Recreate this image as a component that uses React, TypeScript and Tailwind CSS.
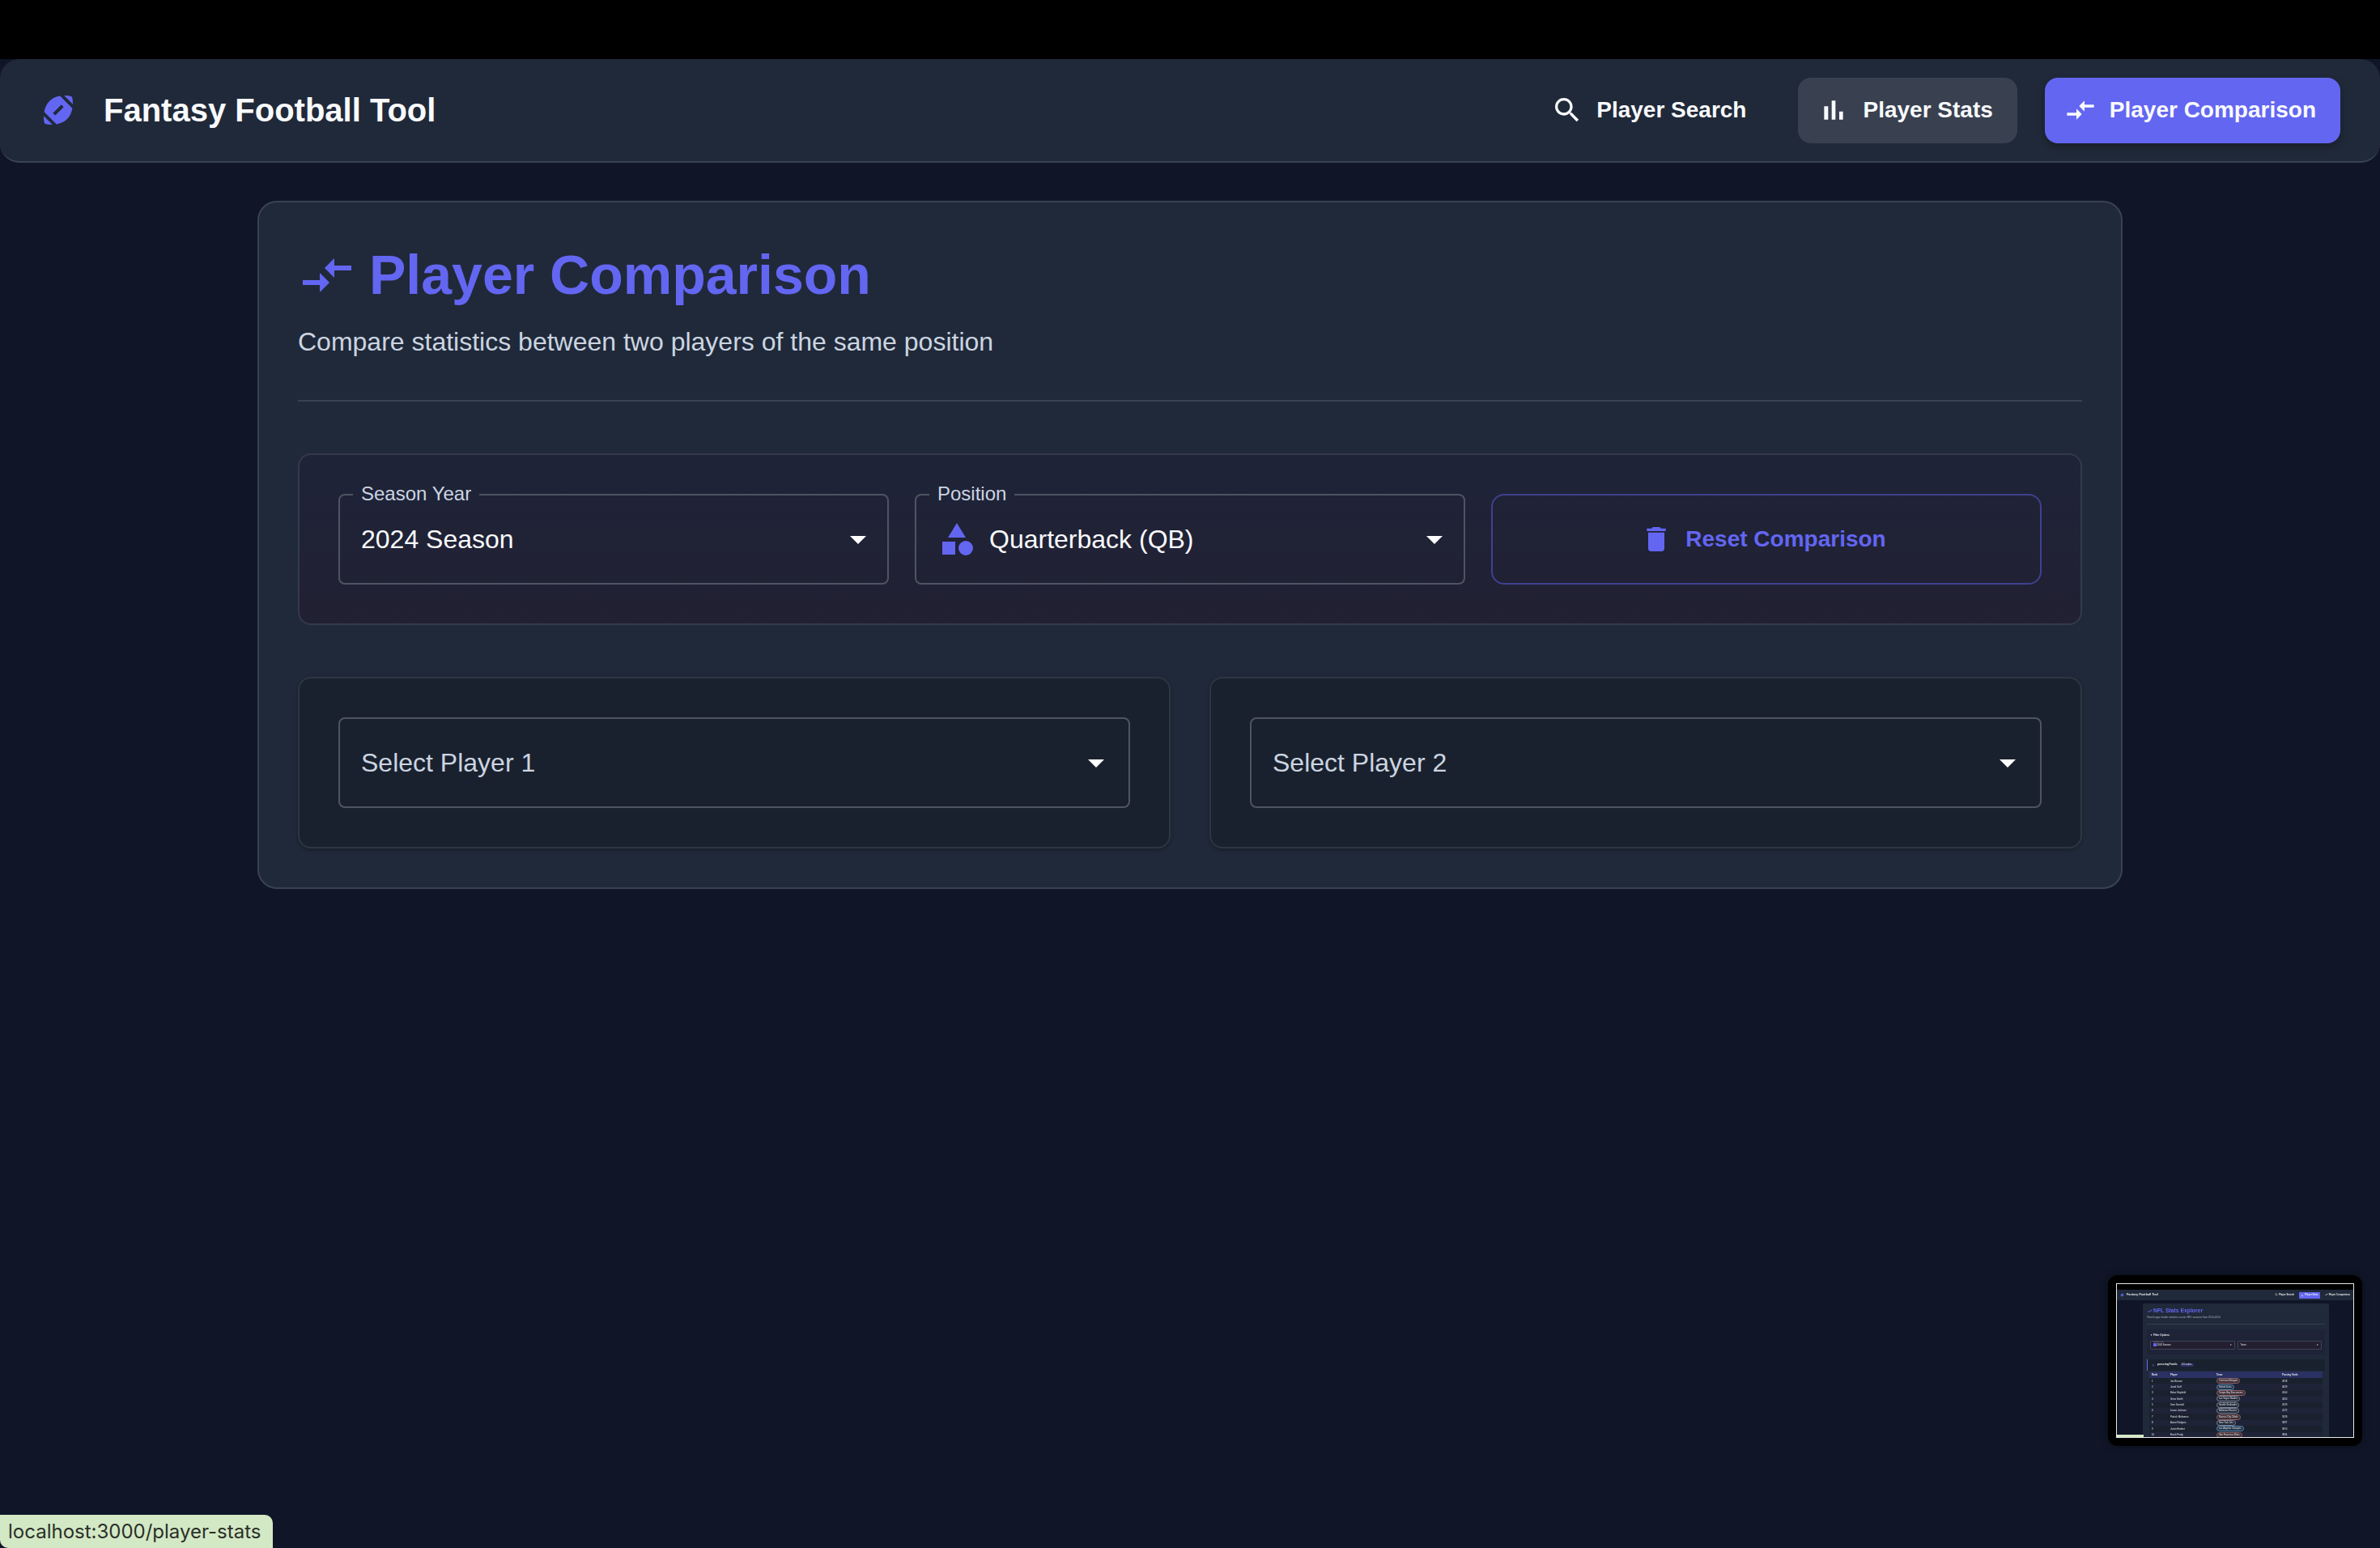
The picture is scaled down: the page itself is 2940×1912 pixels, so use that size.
import type { ReactNode } from "react";

const FONT = "font-['Liberation_Sans','Arial',sans-serif]";

const PATHS = {
  football:
    "M3.02 15.62c-.08 2.42.32 4.34.67 4.69s2.28.76 4.69.67l-5.36-5.36zM13.08 3.28C10.75 3.7 8.29 4.62 6.46 6.46s-2.76 4.29-3.18 6.62l7.63 7.63c2.34-.41 4.79-1.34 6.62-3.18s2.76-4.29 3.18-6.62l-7.63-7.63zm2.23 6.81-5.22 5.22-1.41-1.41 5.22-5.22 1.41 1.41zm5.67-1.71c.08-2.42-.32-4.34-.67-4.69s-2.28-.76-4.69-.67l5.36 5.36z",
  search:
    "M15.5 14h-.79l-.28-.27C15.41 12.59 16 11.11 16 9.5 16 5.91 13.09 3 9.5 3S3 5.91 3 9.5 5.91 16 9.5 16c1.61 0 3.09-.59 4.23-1.57l.27.28v.79l5 4.99L20.49 19l-4.99-5zm-6 0C7.01 14 5 11.99 5 9.5S7.01 5 9.5 5 14 7.01 14 9.5 11.99 14 9.5 14z",
  bars: "M5 9.2h3V19H5zM10.6 5h2.8v14h-2.8zm5.6 8H19v6h-2.8z",
  compare: "M9.01 14H2v2h7.01v3L13 15l-3.99-4zm5.98-1v-3H22V8h-7.01V5L11 9z",
  category: "m12 2-5.5 9h11zM3 13.5h8v8H3zM17.5 13a4.5 4.5 0 1 0 0 9 4.5 4.5 0 0 0 0-9z",
  trash: "M6 19c0 1.1.9 2 2 2h8c1.1 0 2-.9 2-2V7H6v12zM19 4h-3.5l-1-1h-5l-1 1H5v2h14V4z",
  arrow: "m7 10 5 5 5-5z",
  trend: "m16 6 2.29 2.29-4.88 4.88-4-4L2 16.59 3.41 18l6-6 4 4 6.3-6.29L22 12V6z",
};

function Icon({ d, className }: { d: string; className: string }) {
  return (
    <svg viewBox="0 0 24 24" fill="currentColor" className={`shrink-0 ${className}`}>
      <path d={d} />
    </svg>
  );
}

function NavButton({ icon, label, className }: { icon: string; label: string; className: string }) {
  return (
    <div className={`flex h-[81px] items-center gap-[16px] rounded-[16px] pl-[24px] pr-[30px] text-[28px] font-semibold text-[#f8fafc] ${className}`}>
      <Icon d={icon} className="h-[40px] w-[40px]" />
      <span>{label}</span>
    </div>
  );
}

function Select({ label, value, icon, muted }: { label?: string; value: string; icon?: boolean; muted?: boolean }) {
  return (
    <div className={`relative flex h-[112px] flex-1 items-center rounded-[8px] border-2 border-[#4f5463] pl-[26px] ${muted ? "pr-[16px]" : "pr-[12px]"}`}>
      {label && (
        <span className="absolute -top-[17px] left-[16px] bg-[#1f2338] px-[10px] text-[24px] leading-[30px] text-[#cbd5e1]">
          {label}
        </span>
      )}
      {icon && <Icon d={PATHS.category} className="mr-[16px] h-[48px] w-[48px] text-[#6366f1]" />}
      <span className={`flex-1 text-[32px] ${muted ? "text-[#cbd5e1]" : "text-[#f8fafc]"}`}>{value}</span>
      <Icon d={PATHS.arrow} className="h-[48px] w-[48px] text-white" />
    </div>
  );
}

function PlayerCard({ label }: { label: string }) {
  return (
    <div className="flex-1 rounded-[16px] border-2 border-[#2e3544] bg-[#1a212e] p-[48px] shadow-[0_2px_4px_rgba(0,0,0,0.25)]">
      <div className="flex">
        <Select value={label} muted />
      </div>
    </div>
  );
}

const LEADERS = [
  ["Joe Burrow", "Cincinnati Bengals", "4918", "red"],
  ["Jared Goff", "Detroit Lions", "4629", "blue"],
  ["Baker Mayfield", "Tampa Bay Buccaneers", "4500", "red"],
  ["Geno Smith", "Las Vegas Raiders", "4320", "gray"],
  ["Sam Darnold", "Seattle Seahawks", "4319", "gray"],
  ["Lamar Jackson", "Baltimore Ravens", "4172", "gray"],
  ["Patrick Mahomes", "Kansas City Chiefs", "3928", "red"],
  ["Aaron Rodgers", "New York Jets", "3897", "gray"],
  ["Justin Herbert", "Los Angeles Chargers", "3870", "blue"],
  ["Brock Purdy", "San Francisco 49ers", "3864", "red"],
];

function Chip({ tone, children }: { tone: string; children: ReactNode }) {
  const cls =
    tone === "red"
      ? "bg-[#3f2f36] border-[#8a6268]"
      : tone === "blue"
        ? "bg-[#24364c] border-[#5f86a8]"
        : "bg-[#222a3a] border-[#7d8697]";
  return <span className={`inline-block rounded-full border-[0.5px] px-[2px] text-[2.8px] leading-[5px] text-[#e5e7eb] ${cls}`}>{children}</span>;
}

function MiniSelect({ label, value, icon }: { label?: string; value: string; icon?: boolean }) {
  return (
    <div className="relative flex h-[11px] flex-1 items-center justify-between rounded-[1px] border-[0.5px] border-[#3f4456] bg-[#231f30] px-[3px]">
      {label && <span className="absolute -top-[1.5px] left-[3px] text-[2.2px] leading-[3px] text-[#aab2c0]">{label}</span>}
      <span className="flex items-center gap-[1px]">
        {icon && <span className="h-[4px] w-[3.5px] rounded-[0.5px] bg-[#6366f1]" />}
        {value}
      </span>
      <span>▾</span>
    </div>
  );
}

// the little screenshot preview floating bottom right
function Thumbnail() {
  return (
    <div className="absolute bottom-[126px] right-[22px] h-[211px] w-[314px] rounded-[12px] bg-black p-[10px] shadow-[0_0_10px_rgba(0,0,0,0.4)]">
      <div className="relative h-[191px] w-[294px] overflow-hidden border border-[#e8e8e8] bg-[#101628] text-[2.9px] text-[#e5e7eb] blur-[0.35px]">
        <div className="h-[7px] bg-black" />
        <div className="flex h-[13px] items-center justify-between bg-[#202939] px-[4px] font-semibold">
          <div className="flex items-center gap-[3px]">
            <Icon d={PATHS.football} className="h-[5px] w-[5px] text-[#6366f1]" />
            <span className="text-[3.8px]">Fantasy Football Tool</span>
          </div>
          <div className="flex items-center gap-[6px]">
            <span className="flex items-center gap-[1px]"><Icon d={PATHS.search} className="h-[4px] w-[4px]" />Player Search</span>
            <span className="flex h-[8px] items-center gap-[1px] rounded-[1px] bg-[#6366f1] px-[2px]"><Icon d={PATHS.bars} className="h-[4px] w-[4px]" />Player Stats</span>
            <span className="flex items-center gap-[1px]"><Icon d={PATHS.compare} className="h-[4px] w-[4px]" />Player Comparison</span>
          </div>
        </div>
        <div className="mx-[32px] mt-[4px] h-[200px] w-[230px] rounded-[2px] bg-[#202939] px-[5px] pt-[5px]">
          <div className="flex items-center gap-[1px] text-[6.8px] font-bold leading-[8px] text-[#6366f1]">
            <Icon d={PATHS.trend} className="h-[7px] w-[7px]" />
            NFL Stats Explorer
          </div>
          <div className="mt-[2px] text-[3.1px] leading-[5px] text-[#aab2c0]">View league leader statistics across NFL seasons from 2010-2024</div>
          <div className="mt-[5px] h-px bg-[#343c4d]" />
          <div className="mt-[6px] h-[31px] rounded-[1px] bg-[#1f2338] px-[4px] pt-[5px]">
            <div className="text-[3.1px] font-semibold leading-[5px]">▼ Filter Options</div>
            <div className="mt-[4px] flex gap-[3px]">
              <MiniSelect label="Season Year" value="2024 Season" icon />
              <MiniSelect value="Team" />
            </div>
          </div>
          <div className="mt-[6px] flex h-[14px] items-center gap-[3px] border-l border-[#6366f1] bg-[#1a212e] pl-[5px]">
            <Icon d={PATHS.bars} className="h-[4px] w-[4px] text-[#6366f1]" />
            <span className="text-[3.8px] font-semibold">passingYards</span>
            <span className="rounded-full bg-[#2c2f63] px-[2px] text-[2.6px] leading-[4px]">10 Leaders</span>
          </div>
          <div className="mx-[3px] mt-[1px]">
            <div className="flex h-[8px] items-center rounded-t-[1px] bg-[#2a3163] font-semibold">
              <span className="w-[26px] pl-[3px]">Rank</span>
              <span className="w-[57px]">Player</span>
              <span className="w-[81px]">Team</span>
              <span>Passing Yards</span>
            </div>
            {LEADERS.map(([name, team, yards, tone], i) => (
              <div key={name} className={`flex h-[7.4px] items-center ${i % 2 ? "bg-[#1f2338]" : "bg-[#1a212e]"}`}>
                <span className="w-[26px] pl-[3px]">{i + 1}</span>
                <span className="w-[57px]">{name}</span>
                <span className="flex w-[81px] items-center"><Chip tone={tone}>{team}</Chip></span>
                <span>{yards}</span>
              </div>
            ))}
          </div>
        </div>
        <div className="absolute bottom-0 left-0 h-[3px] w-[33px] bg-[#d3e8c4]" />
      </div>
    </div>
  );
}

export default function App() {
  return (
    <div className={`relative h-[1912px] overflow-hidden bg-[#101628] ${FONT}`}>
      <div className="h-[73px] bg-black" />

      <nav className="flex h-[128px] items-center justify-between rounded-[24px] border-b-2 border-[#3a4252] bg-[#202939] pl-[48px] pr-[49px]">
        <div className="flex items-center gap-[32px]">
          <Icon d={PATHS.football} className="h-[48px] w-[48px] text-[#6366f1]" />
          <span className="text-[40px] font-semibold text-[#f8fafc]">Fantasy Football Tool</span>
        </div>
        <div className="flex items-center gap-[34px]">
          <NavButton icon={PATHS.search} label="Player Search" className="" />
          <NavButton icon={PATHS.bars} label="Player Stats" className="bg-[#394150]" />
          <NavButton
            icon={PATHS.compare}
            label="Player Comparison"
            className="bg-[#6366f1] shadow-[0_4px_10px_rgba(0,0,0,0.25)]"
          />
        </div>
      </nav>

      <main className="mx-auto mt-[47px] w-[2304px] rounded-[24px] border-2 border-[#3a4252] bg-[#202939] p-[48px]">
        <div className="flex items-center gap-[16px]">
          <Icon d={PATHS.compare} className="h-[72px] w-[72px] text-[#6366f1]" />
          <h1 className="pb-[2px] text-[68px] font-bold leading-[82px] text-[#6366f1]">Player Comparison</h1>
        </div>
        <p className="mt-[16px] text-[32px] leading-[48px] text-[#cbd5e1]">
          Compare statistics between two players of the same position
        </p>
        <div className="mb-[64px] mt-[48px] h-[2px] bg-[#3a4252]" />

        <section className="grid grid-cols-3 gap-[32px] rounded-[16px] border-2 border-[#343a4a] bg-gradient-to-b from-[#1e2438] to-[#222033] p-[48px]">
          <div className="flex"><Select label="Season Year" value="2024 Season" /></div>
          <div className="flex"><Select label="Position" value="Quarterback (QB)" icon /></div>
          <div className="flex h-[112px] items-center justify-center gap-[16px] rounded-[16px] border-2 border-[#3f418f] pr-[8px] text-[28px] font-semibold text-[#6366f1]">
            <Icon d={PATHS.trash} className="h-[40px] w-[40px]" />
            Reset Comparison
          </div>
        </section>

        <section className="mt-[64px] flex gap-[48px]">
          <PlayerCard label="Select Player 1" />
          <PlayerCard label="Select Player 2" />
        </section>
      </main>

      <Thumbnail />

      <div className="absolute bottom-0 left-0 flex h-[41px] w-[337px] items-center whitespace-nowrap rounded-bl-[10px] rounded-tr-[10px] bg-[#d3e8c4] pl-[10px] font-['Inter',sans-serif] text-[24px] text-[#2a2f2a]">
        localhost:3000/player-stats
      </div>
    </div>
  );
}
